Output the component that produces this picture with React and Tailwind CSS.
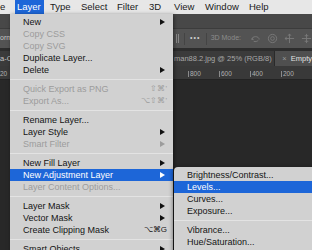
import React from 'react';

const font = { fontFamily: '"Liberation Sans", Arial, sans-serif' };

const mainItems = [
  { label: 'New', arrow: true },
  { label: 'Copy CSS', disabled: true },
  { label: 'Copy SVG', disabled: true },
  { label: 'Duplicate Layer...' },
  { label: 'Delete', arrow: true },
  'sep',
  { label: 'Quick Export as PNG', disabled: true, shortcut: "⇧⌘'" },
  { label: 'Export As...', disabled: true, shortcut: "⌥⇧⌘'" },
  'sep',
  { label: 'Rename Layer...' },
  { label: 'Layer Style', arrow: true },
  { label: 'Smart Filter', disabled: true, arrow: true },
  'sep',
  { label: 'New Fill Layer', arrow: true },
  { label: 'New Adjustment Layer', arrow: true, active: true },
  { label: 'Layer Content Options...', disabled: true },
  'sep',
  { label: 'Layer Mask', arrow: true },
  { label: 'Vector Mask', arrow: true },
  { label: 'Create Clipping Mask', shortcut: '⌥⌘G' },
  'sep',
  { label: 'Smart Objects', arrow: true },
];

const subItems = [
  { label: 'Brightness/Contrast...' },
  { label: 'Levels...', active: true },
  { label: 'Curves...' },
  { label: 'Exposure...' },
  'sep',
  { label: 'Vibrance...' },
  { label: 'Hue/Saturation...' },
  { label: 'Color Balance...' },
];

// menu bar titles, each span as wide as the gap to the next title
const titles = [
  ['Type', 'w-[31px]'],
  ['Select', 'w-[36px]'],
  ['Filter', 'w-[32px]'],
  ['3D', 'w-[25px]'],
  ['View', 'w-[31px]'],
  ['Window', 'w-[44px]'],
  ['Help', 'w-[30px]'],
];

function Arrow({ color }) {
  return (
    <svg width="5" height="6" viewBox="0 0 5 6" className="shrink-0">
      <polygon points="0,0 5,3 0,6" fill={color} />
    </svg>
  );
}

function MenuRow({ item }) {
  if (item === 'sep') {
    return (
      <div className="h-[7px] flex items-center">
        <div className="h-px w-full bg-[#e3e3e3]" />
      </div>
    );
  }
  const text = item.active ? 'text-white' : item.disabled ? 'text-[#9c9c9c]' : 'text-[#141414]';
  return (
    <div
      className={`h-[12px] flex items-center pl-[13px] pr-[8px] text-[9px] leading-none whitespace-nowrap ${text} ${
        item.active ? 'bg-[#1d66d8]' : ''
      }`}
    >
      <span className="flex-1">{item.label}</span>
      {item.shortcut && <span className="text-[8px] mr-[-2px]">{item.shortcut}</span>}
      {item.arrow && (
        <Arrow color={item.active ? '#ffffff' : item.disabled ? '#9c9c9c' : '#111111'} />
      )}
    </div>
  );
}

function Icon3D({ kind }) {
  return (
    <svg width="11" height="11" viewBox="0 0 12 12" fill="none" stroke="#7a7a7a" strokeWidth="1">
      {kind === 0 && <path d="M2 7 C2 3 10 3 10 7 M4 9 C6 10 8 9 9 8 M3 5 L2 7 L4 7" />}
      {kind === 1 && (
        <>
          <circle cx="6" cy="6" r="4.5" />
          <circle cx="6" cy="6" r="2" />
        </>
      )}
      {kind === 2 && <path d="M6 1 L6 11 M1 6 L11 6 M6 1 L4.5 3 M6 1 L7.5 3 M1 6 L3 4.5 M1 6 L3 7.5" />}
      {kind === 3 && <path d="M6 1 L6 11 M1 6 L11 6 M4 3 L8 3 M4 9 L8 9" />}
    </svg>
  );
}

export default function App() {
  return (
    <div className="relative w-[312px] h-[250px] overflow-hidden bg-[#282828]" style={font}>
      {/* menu bar */}
      <div className="h-[14px] flex items-center bg-[#e7e7e7] text-[9.5px] text-[#1a1a1a] leading-none whitespace-nowrap">
        <span className="w-[15px]">e</span>
        <span className="h-full w-[29px] flex items-center pl-[2px] bg-[#1d66d8] text-white">Layer</span>
        <span className="w-[6px]" />
        {titles.map(([t, w]) => (
          <span key={t} className={w}>
            {t}
          </span>
        ))}
      </div>

      {/* photoshop chrome underneath */}
      <div className="h-[14px] bg-[#484848]" />
      <div className="h-[20px] flex items-center bg-[#535353] border-t border-[#3c3c3c] text-[7px] text-[#9a9a9a] whitespace-nowrap">
        <span className="w-[10px] text-[#c8c8c8]">orm</span>
        <div className="ml-[166px] w-[5px] h-[9px] border-x border-[#8a8a8a]" />
        <div className="ml-[5px] h-[12px] w-px bg-[#444]" />
        <span className="ml-[6px] text-[#d0d0d0] tracking-[1px]">•••</span>
        <div className="ml-[6px] h-[12px] w-px bg-[#444]" />
        <span className="ml-[4px] text-[#8c8c8c]">3D Mode:</span>
        <div className="ml-[9px] flex gap-[6px]">
          <Icon3D kind={0} />
          <Icon3D kind={1} />
          <Icon3D kind={2} />
          <Icon3D kind={3} />
        </div>
      </div>
      <div className="h-[3px] bg-[#2d2d2d]" />
      <div className="h-[15px] flex items-center bg-[#3b3b3b] text-[7.5px] text-[#a8a8a8] whitespace-nowrap">
        <span className="w-[10px] text-[#c8c8c8]">a-C</span>
        <span className="ml-[164px] w-[107px] overflow-hidden">man88.2.jpg @ 25% (RGB/8)</span>
        <div className="h-full flex items-center bg-[#4f4f4f] pl-[7px] text-[#e0e0e0] border-l border-[#2a2a2a]">
          <span className="text-[#9a9a9a] mr-[4px]">×</span>
          <span>Empty</span>
        </div>
      </div>
      <div className="h-[14px] flex items-end pb-[2px] bg-[#393939] border-b border-[#232323] text-[6.5px] text-[#b0b0b0] leading-none">
        <span className="w-[10px]">20</span>
        <div className="ml-[180px] flex">
          {['800', '600', '400', '200'].map((n) => (
            <span key={n} className="w-[31px] pl-[1px] border-l border-[#8a8a8a]">
              {n}
            </span>
          ))}
        </div>
      </div>

      {/* Layer menu */}
      <div className="absolute left-[10px] top-[14px] w-[163px] pt-[2px] pb-[4px] bg-[#d1d1d1] shadow-[1px_1px_4px_rgba(0,0,0,0.5)]">
        {mainItems.map((it, i) => (
          <MenuRow key={i} item={it} />
        ))}
      </div>

      {/* New Adjustment Layer submenu */}
      <div className="absolute left-[174px] top-[167px] w-[150px] pt-[2px] pb-[4px] bg-[#d1d1d1] rounded-tl-[4px] shadow-[-1px_1px_4px_rgba(0,0,0,0.5)]">
        {subItems.map((it, i) => (
          <MenuRow key={i} item={it} />
        ))}
      </div>
    </div>
  );
}
